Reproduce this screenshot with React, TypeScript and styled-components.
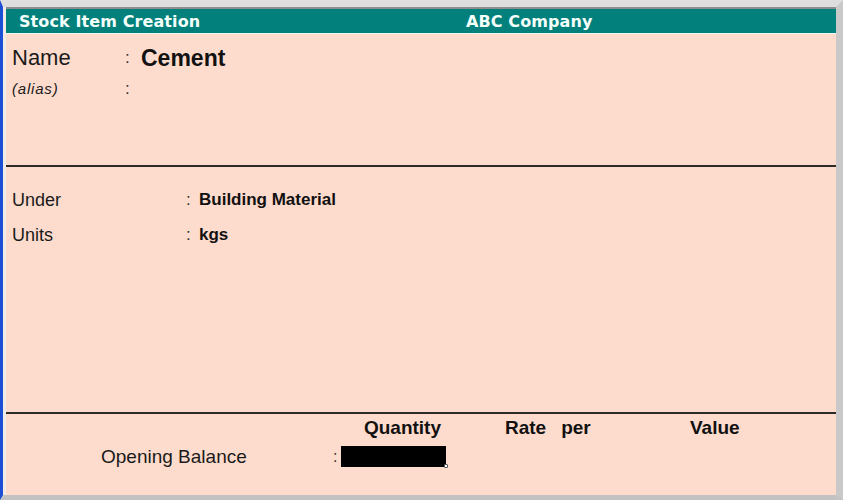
import React from 'react';
import styled, { createGlobalStyle } from 'styled-components';

const GlobalStyle = createGlobalStyle`
  html, body {
    margin: 0;
    padding: 0;
    background: #ffffff;
  }
`;

const Window = styled.div`
  box-sizing: border-box;
  width: 843px;
  height: 500px;
  display: flex;
  flex-direction: column;
  border-left: 3px solid #1d4fd4;
  border-top: 7px solid #dedede;
  border-right: 7px solid #c9c9c9;
  border-bottom: 5px solid #c2c2c2;
  background: #f3ebe7;
  font-family: "Liberation Sans", Arial, sans-serif;
  color: #111;
`;

const Inner = styled.div`
  flex: 1;
  display: flex;
  flex-direction: column;
  margin-left: 3px;
  border-top: 2px solid #8e8e8e;
  background: #fedccd;
`;

const TitleBar = styled.div`
  display: grid;
  grid-template-columns: 447px 1fr;
  height: 24px;
  align-items: center;
  padding-left: 13px;
  background: #02807c;
  border-bottom: 1px solid #eef6f2;
  color: #f4fffb;
  font-family: "DejaVu Sans", sans-serif;
  font-weight: bold;
  font-size: 16px;
  letter-spacing: 0.1px;
`;

const NameBlock = styled.div`
  height: 131px;
  box-sizing: border-box;
  padding: 11px 0 0 6px;
`;

const FieldRow = styled.div<{ $label: number; $gap?: number }>`
  display: grid;
  grid-template-columns: ${p => p.$label}px ${p => p.$gap ?? 13}px 1fr;
  align-items: center;
`;

const Label = styled.span<{ $size: number; $italic?: boolean }>`
  font-size: ${p => p.$size}px;
  font-style: ${p => (p.$italic ? 'italic' : 'normal')};
  letter-spacing: ${p => (p.$italic ? '0.8px' : '0')};
  color: #1a1a1a;
`;

const Colon = styled.span<{ $size?: number }>`
  font-size: ${p => p.$size ?? 17}px;
  color: #333;
`;

const Value = styled.span<{ $size: number }>`
  font-size: ${p => p.$size}px;
  font-weight: bold;
  color: #111;
`;

const NameRow = styled(FieldRow)`
  line-height: 26px;
`;

const AliasRow = styled(FieldRow)`
  line-height: 18px;
  margin-top: 9px;
`;

const Divider = styled.div`
  height: 2px;
  background: #2e2a28;
`;

const DetailBlock = styled.div`
  flex: 1;
  display: flex;
  flex-direction: column;
  gap: 13px;
  padding: 22px 0 0 6px;
`;

const DetailRow = styled(FieldRow)`
  line-height: 22px;
`;

const BalanceBlock = styled.div`
  height: 81px;
  box-sizing: border-box;
  padding-top: 3px;
  display: grid;
  grid-template-columns: 327px 8px 105px 59px 185px auto;
  grid-template-rows: 22px 21px;
  row-gap: 7px;
`;

const ColHead = styled.span<{ $col: number; $right?: boolean }>`
  grid-row: 1;
  grid-column: ${p => p.$col};
  font-size: 19px;
  font-weight: bold;
  line-height: 22px;
  text-align: ${p => (p.$right ? 'right' : 'left')};
  padding-right: ${p => (p.$right ? '5px' : '0')};
  color: #111;
`;

const RateHead = styled(ColHead)`
  display: flex;
  gap: 15px;
`;

const BalanceLabel = styled.span`
  grid-row: 2;
  grid-column: 1;
  padding-left: 95px;
  font-size: 19px;
  line-height: 21px;
  color: #1a1a1a;
`;

const BalanceColon = styled.span`
  grid-row: 2;
  grid-column: 2;
  font-size: 16px;
  line-height: 21px;
  color: #333;
`;

const InputBox = styled.div`
  grid-row: 2;
  grid-column: 3;
  position: relative;
  background: #000;

  &::after {
    content: '';
    position: absolute;
    right: -2px;
    bottom: -1px;
    width: 4px;
    height: 4px;
    border-radius: 1px;
    background: #fff;
    border: 1px solid #555;
    box-sizing: border-box;
  }
`;

export default function App() {
  return (
    <>
      <GlobalStyle />
      <Window>
        <Inner>
          <TitleBar>
            <span>Stock Item Creation</span>
            <span>ABC Company</span>
          </TitleBar>

          <NameBlock>
            <NameRow $label={113} $gap={16}>
              <Label $size={22}>Name</Label>
              <Colon>:</Colon>
              <Value $size={23}>Cement</Value>
            </NameRow>
            <AliasRow $label={113} $gap={16}>
              <Label $size={15} $italic>(alias)</Label>
              <Colon>:</Colon>
              <span />
            </AliasRow>
          </NameBlock>

          <Divider />

          <DetailBlock>
            <DetailRow $label={174}>
              <Label $size={18}>Under</Label>
              <Colon>:</Colon>
              <Value $size={17}>Building Material</Value>
            </DetailRow>
            <DetailRow $label={174}>
              <Label $size={18}>Units</Label>
              <Colon>:</Colon>
              <Value $size={17}>kgs</Value>
            </DetailRow>
          </DetailBlock>

          <Divider />

          <BalanceBlock>
            <ColHead $col={3} $right>Quantity</ColHead>
            <RateHead $col={5}>
              <span>Rate</span>
              <span>per</span>
            </RateHead>
            <ColHead $col={6}>Value</ColHead>
            <BalanceLabel>Opening Balance</BalanceLabel>
            <BalanceColon>:</BalanceColon>
            <InputBox />
          </BalanceBlock>
        </Inner>
      </Window>
    </>
  );
}
